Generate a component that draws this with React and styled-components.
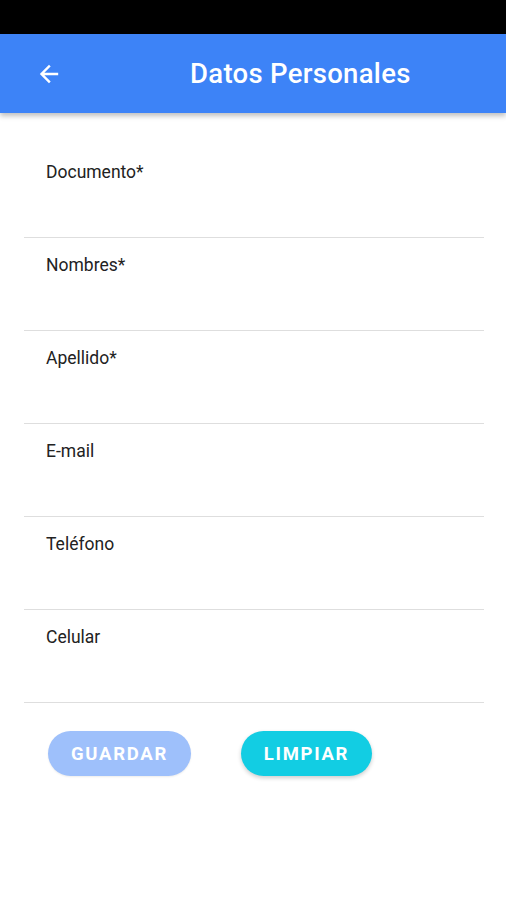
import React from 'react'
import styled, { createGlobalStyle } from 'styled-components'

const GlobalStyle = createGlobalStyle`
  html, body {
    margin: 0;
    padding: 0;
    background: #ffffff;
    font-family: Roboto, "Noto Sans", sans-serif;
  }
`

const fields = ['Documento*', 'Nombres*', 'Apellido*', 'E-mail', 'Teléfono', 'Celular']

const App = () => {
  return (
    <Wrapper>
      <GlobalStyle />
      <StatusBar />
      <AppBar>
        <BackButton aria-label="back">
          <svg width="24" height="24" viewBox="0 0 24 24" fill="none">
            <path d="M20 12H5M12 4.5L4.5 12l7.5 7.5" stroke="#fff" strokeWidth="2.4" strokeLinecap="square" />
          </svg>
        </BackButton>
        <Title>Datos Personales</Title>
      </AppBar>

      <Form>
        {fields.map((f) => (
          <Field key={f}>
            <Label>{f}</Label>
          </Field>
        ))}
        <Actions>
          <Button $bg="#9ec0fb" $width="143px">GUARDAR</Button>
          <Button $bg="#12cde3" $width="131px" $raised>LIMPIAR</Button>
        </Actions>
      </Form>
    </Wrapper>
  )
}

const Wrapper = styled.main`
  width: 506px;
  min-height: 900px;
  background: #fff;
`

const StatusBar = styled.div`
  height: 34px;
  background: #000;
`

const AppBar = styled.header`
  height: 79px;
  background: #3d83f7;
  display: flex;
  align-items: center;
  position: relative;
  box-shadow: 0 3px 5px rgba(0, 0, 0, 0.25);
`

const BackButton = styled.button`
  border: 0;
  background: transparent;
  padding: 0;
  margin-left: 37px;
  width: 24px;
  height: 24px;
  display: flex;
  align-items: center;
  justify-content: center;
`

const Title = styled.h1`
  margin: 0 0 0 129px;
  color: #fff;
  font-size: 27.5px;
  font-weight: 500;
  letter-spacing: 0.3px;
`

const Form = styled.section`
  padding: 32px 22px 0 24px;
`

const Field = styled.div`
  height: 93px;
  border-bottom: 1px solid #dedede;
  padding: 17px 0 0 22px;
  box-sizing: border-box;
`

const Label = styled.label`
  font-size: 17.5px;
  color: #222;
`

const Actions = styled.div`
  display: flex;
  gap: 50px;
  padding: 28px 0 0 24px;
`

const Button = styled.button`
  width: ${(p) => p.$width};
  height: 45px;
  border: 0;
  border-radius: 23px;
  background: ${(p) => p.$bg};
  color: #fff;
  font-family: Roboto, sans-serif;
  font-size: 18.5px;
  font-weight: 700;
  letter-spacing: 1.7px;
  box-shadow: ${(p) => (p.$raised ? '0 2px 4px rgba(0,0,0,0.2)' : '0 1px 2px rgba(0,0,0,0.08)')};
`

export default App
